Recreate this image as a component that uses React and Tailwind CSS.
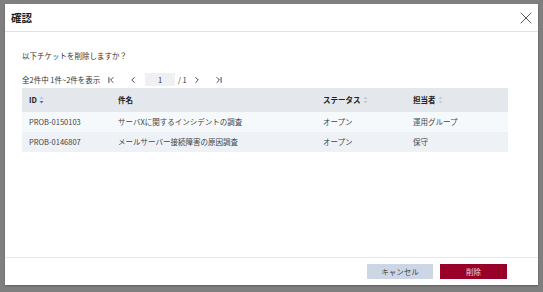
import { ChevronFirst, ChevronLeft, ChevronRight, ChevronLast, X } from "lucide-react";

const SortIcon = ({ active }) => (
  <svg width="5" height="8" viewBox="0 0 5 8" className="ml-[2px]">
    <path d="M2.5 0.5 L4.5 3 L0.5 3 Z" fill={active ? "#a9c6ec" : "#c3c9d2"} />
    <path d="M2.5 7.5 L4.5 5 L0.5 5 Z" fill={active ? "#2f7be0" : "#c3c9d2"} />
  </svg>
);

const rows = [
  { id: "PROB-0150103", title: "サーバXに関するインシデントの調査", status: "オープン", owner: "運用グループ", bg: "bg-[#f6f9fc]" },
  { id: "PROB-0146807", title: "メールサーバー接続障害の原因調査", status: "オープン", owner: "保守", bg: "bg-[#eef1f5]" },
];

export default function App() {
  return (
    <div className="w-[543px] h-[292px] bg-[#7f7f7f] pt-[4px] pl-[5px] overflow-hidden font-['Noto_Sans_CJK_JP','Noto_Sans',sans-serif]">
      <div className="w-[533px] h-[281px] bg-white flex flex-col shadow-[0_1px_2px_rgba(0,0,0,0.25)]">
        {/* header */}
        <div className="h-[28px] shrink-0 border-b border-[#dde3ee] flex items-center justify-between pl-[6px] pr-[2px]">
          <span className="text-[10.5px] font-bold text-[#222]">確認</span>
          <X size={20} strokeWidth={1.2} className="text-[#555]" />
        </div>

        {/* body */}
        <div className="flex-1 pl-[17px] pr-[30px] pt-[18px]">
          <p className="text-[7.5px] leading-[11px] text-[#333]">以下チケットを削除しますか？</p>

          <div className="mt-[12px] h-[13px] flex items-center text-[7.5px] text-[#333]">
            <span className="w-[84px] whitespace-nowrap">全2件中 1件~2件を表示</span>
            <ChevronFirst size={10} strokeWidth={2.2} className="text-[#333]" />
            <ChevronLeft size={10} strokeWidth={2.2} className="ml-[12px] text-[#333]" />
            <div className="ml-[7px] w-[30px] h-[13px] bg-[#eef0f3] flex items-center justify-center">1</div>
            <span className="ml-[3px]">/ 1</span>
            <ChevronRight size={10} strokeWidth={2.2} className="ml-[5px] text-[#333]" />
            <ChevronLast size={10} strokeWidth={2.2} className="ml-[12px] text-[#333]" />
          </div>

          <div className="mt-[2px] w-[486px] text-[7.5px]">
            <div className="grid grid-cols-[89px_205px_90px_102px] h-[24px] items-center bg-[#e4e7eb] font-bold text-[#222]">
              <div className="pl-[7px] flex items-center">ID<SortIcon active /></div>
              <div className="pl-[7px]">件名</div>
              <div className="pl-[7px] flex items-center">ステータス<SortIcon /></div>
              <div className="pl-[7px] flex items-center">担当者<SortIcon /></div>
            </div>
            {rows.map((r) => (
              <div
                key={r.id}
                className={`grid grid-cols-[89px_205px_90px_102px] h-[20px] items-center text-[#444] ${r.bg}`}
              >
                <div className="pl-[7px]">{r.id}</div>
                <div className="pl-[7px]">{r.title}</div>
                <div className="pl-[7px]">{r.status}</div>
                <div className="pl-[7px]">{r.owner}</div>
              </div>
            ))}
          </div>
        </div>

        {/* footer */}
        <div className="h-[28px] shrink-0 border-t border-[#e4e8ef] flex items-center justify-end gap-[7px] pr-[31px]">
          <button className="w-[66px] h-[15px] bg-[#ccd6e4] text-[7.5px] text-[#444] flex items-center justify-center">
            キャンセル
          </button>
          <button className="w-[67px] h-[15px] bg-[#990029] text-[7.5px] text-[#f3d6dd] flex items-center justify-center">
            削除
          </button>
        </div>
      </div>
    </div>
  );
}
